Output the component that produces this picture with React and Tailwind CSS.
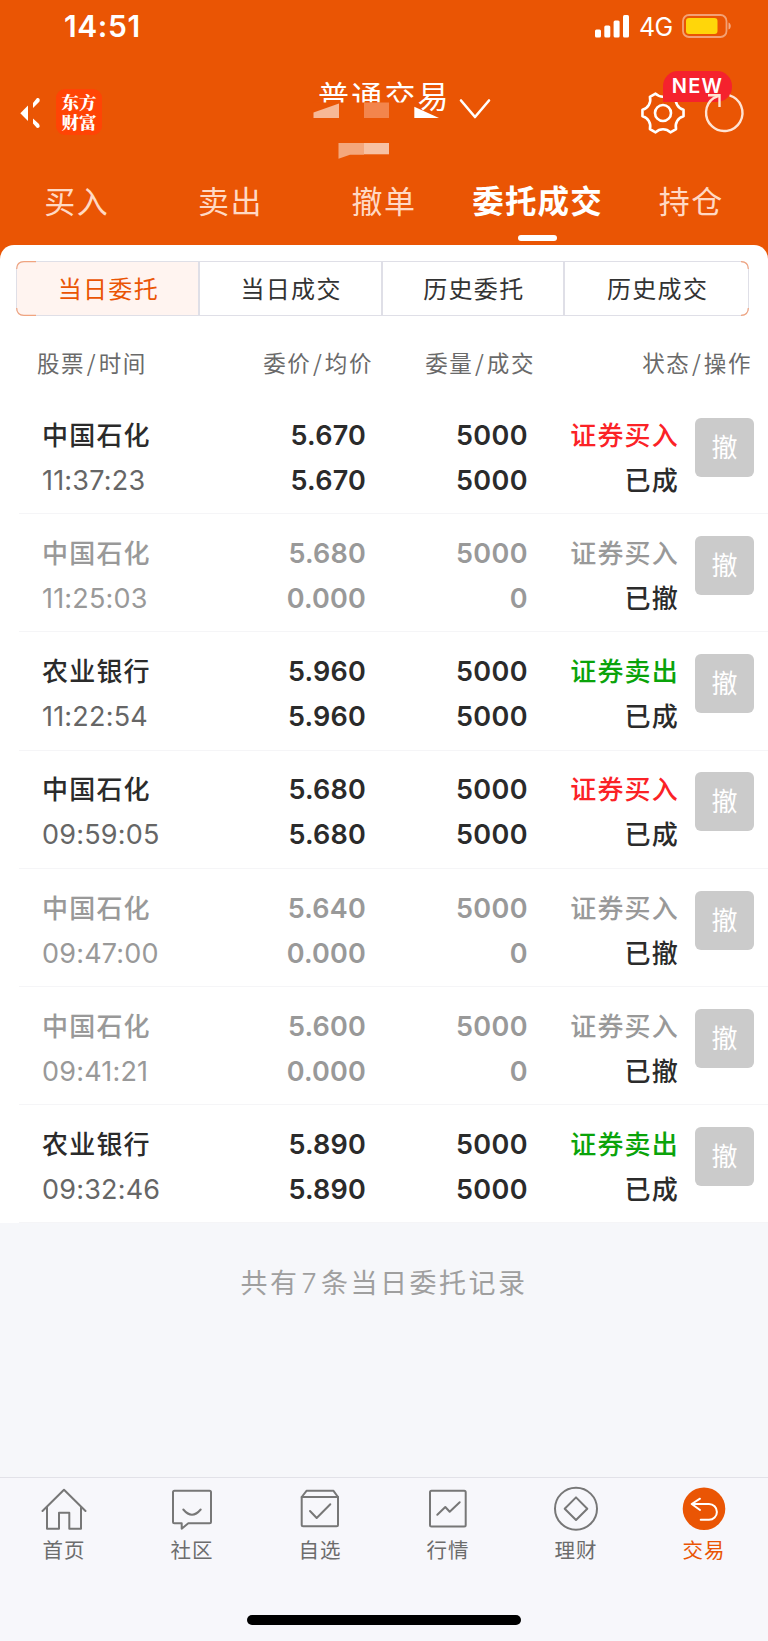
const TABS = ["买入", "卖出", "撤单", "委托成交", "持仓"];
const SEGMENTS = ["当日委托", "当日成交", "历史委托", "历史成交"];

const ORDERS = [
  { name:"中国石化", time:"11:37:23", price:"5.670", avg:"5.670", qty:"5000", filled:"5000", side:"buy",  done:true },
  { name:"中国石化", time:"11:25:03", price:"5.680", avg:"0.000", qty:"5000", filled:"0",    side:"buy",  done:false },
  { name:"农业银行", time:"11:22:54", price:"5.960", avg:"5.960", qty:"5000", filled:"5000", side:"sell", done:true },
  { name:"中国石化", time:"09:59:05", price:"5.680", avg:"5.680", qty:"5000", filled:"5000", side:"buy",  done:true },
  { name:"中国石化", time:"09:47:00", price:"5.640", avg:"0.000", qty:"5000", filled:"0",    side:"buy",  done:false },
  { name:"中国石化", time:"09:41:21", price:"5.600", avg:"0.000", qty:"5000", filled:"0",    side:"buy",  done:false },
  { name:"农业银行", time:"09:32:46", price:"5.890", avg:"5.890", qty:"5000", filled:"5000", side:"sell", done:true },
];

const SIDE = {
  buy:  { label:"证券买入", color:"text-[#fb2226]" },
  sell: { label:"证券卖出", color:"text-[#0aa30a]" },
};

// six flat teeth with a hollow between each pair
const gearPath = (() => {
  const pt = (deg, r) => {
    const a = deg * Math.PI / 180;
    return `${(r * Math.cos(a)).toFixed(2)} ${(r * Math.sin(a)).toFixed(2)}`;
  };
  let d = `M${pt(-9, 20.8)}`;
  for (let k = 0; k < 6; k++) {
    const b = k * 60;
    d += `L${pt(b + 9, 20.8)}C${pt(b + 18, 15.6)} ${pt(b + 42, 15.6)} ${pt(b + 51, 20.8)}`;
  }
  return d + "Z";
})();

const StatusBar = () => (
  <div className="flex h-[52px] items-center justify-between pl-[64px] pr-[36px]">
    <span className="text-[30px] font-semibold leading-[52px] tracking-[0.6px]">14:51</span>
    <div className="flex items-center">
      <svg width="34" height="23" viewBox="0 0 34 23" fill="#fff">
        <rect x="0" y="14.5" width="6" height="8" rx="1.5" />
        <rect x="9.3" y="10.5" width="6" height="12" rx="1.5" />
        <rect x="18.6" y="5.5" width="6" height="17" rx="1.5" />
        <rect x="28" y="0" width="6" height="22.5" rx="1.5" />
      </svg>
      <span className="ml-[10px] w-[43px] pt-[2px] text-[25px] leading-[50px] tracking-[-0.6px]">4G</span>
      <svg width="50" height="24" viewBox="0 0 50 24">
        <rect x="1" y="1" width="43.5" height="22" rx="6" fill="none" stroke="#fff" strokeOpacity=".45" strokeWidth="1.8" />
        <rect x="4" y="4" width="31.5" height="16" rx="3" fill="#ffd60a" />
        <path d="M46.5 8.5c3 1 3 6 0 7z" fill="#fff" fillOpacity=".5" />
      </svg>
    </div>
  </div>
);

const TitleBar = () => (
  <div className="flex h-[120px] items-start pl-[18px] pr-[21px]">
    <div className="flex pt-[37px]">
      <svg className="mt-[6px]" width="24" height="38" viewBox="0 0 24 38" fill="#fff">
        <path d="M2.3 18.3L10 10.5v15.5z" />
        <path d="M15 8v5l6.5-6.5q1-4-2.500-3.500zM15 23.500v5l4 4.500q4 0 2-4z" />
      </svg>
      <div className="ml-[14px] flex size-[46px] flex-col items-center justify-center rounded-[9px] bg-[#ff4405] font-['Noto_Serif_CJK_SC','Noto_Sans_CJK_SC',serif] text-[17.5px] font-black leading-[20px]">
        <span>东方</span>
        <span>财富</span>
      </div>
    </div>
    <div className="relative ml-[216px] flex pt-[23px]">
      <span className="text-[31px] leading-[44px] tracking-[2.2px]">普通交易</span>
      <svg className="ml-[7px] mt-[22px]" width="34" height="24" viewBox="0 0 34 24" fill="none" stroke="#fff" strokeWidth="2.6" strokeLinecap="round" strokeLinejoin="round">
        <path d="M3 3.500L17 20L31 3.500" />
      </svg>
      {/* masked account number */}
      <svg className="absolute -left-[5px] top-[50px]" width="130" height="60" viewBox="313 102 130 60">
        <path d="M313 102.5H414.3V120H313z" fill="#ea5504" />
        <path d="M313.5 112.5L339 103.5V118H313.5z" fill="#f7b896" />
        <path d="M364 102.5H389V118H364z" fill="#f3854c" />
        <path d="M414.3 106.7L439 118H414.3z" fill="#fff" />
        <path d="M338.5 143H364V154.7H350L338.5 158.7z" fill="#f4a77c" />
        <path d="M364 143H389V154.3H364z" fill="#f7c1a3" />
      </svg>
    </div>
    <div className="relative ml-auto flex gap-[15px] pt-[38px]">
      <svg width="46" height="46" viewBox="-23 -23 46 46" fill="none" stroke="#fff" strokeWidth="2.6" strokeLinejoin="round">
        <path d={gearPath} />
        <circle r="8" />
      </svg>
      <span className="absolute left-[23px] top-[19px] h-[31px] w-[69px] rounded-[15px] rounded-bl-none bg-[#f5222d] text-center text-[20px] font-semibold leading-[31px] tracking-[1.2px]">NEW</span>
      <svg className="relative" width="46" height="46" viewBox="-23 -23 46 46" fill="none" stroke="#ffe3d3" strokeWidth="2.4">
        <path d="M5.5 -17.6A18.2 18.2 0 1 1 -10 -15.2L-5 -17.4" />
        <path d="M-16 -17.8H-4.5V-6" />
      </svg>
    </div>
  </div>
);

const Tabs = () => (
  <div className="grid grid-cols-5">
    {TABS.map((t, i) => (
      <div key={t} className="flex flex-col items-center whitespace-nowrap">
        {i === 3
          ? <span className="text-[31.5px] font-semibold leading-[60px] tracking-[1.2px]">{t}</span>
          : <span className="text-[31px] leading-[60px] tracking-[1.5px] text-[#ffd9c4]">{t}</span>}
        {i === 3 && <div className="mt-[3px] h-[6px] w-[39px] rounded-full bg-white" />}
      </div>
    ))}
  </div>
);

const Segments = () => (
  <div className="relative mx-[16px] w-[733px]">
    <div className="grid h-[55px] grid-cols-4 overflow-hidden rounded-[8px] border-[1.5px] border-[#dfdfe7]">
      {SEGMENTS.map((s, i) => (
        <div key={s} className={i === 0
          ? "border-r-2 border-[#dfdfe7] bg-[#fff4f0] pl-[2px] text-center text-[24px] leading-[55px] tracking-[1.3px] text-[#ea5504]"
          : "border-r-2 border-[#dfdfe7] pl-[2px] text-center text-[24px] leading-[55px] tracking-[1.3px] text-[#333] last:border-r-0"}>
          {s}
        </div>
      ))}
    </div>
    {/* orange corner ends */}
    <svg className="absolute left-0 top-0" width="733" height="55" viewBox="0 0 733 55" fill="none" stroke="#f0a480" strokeWidth="1.2">
      <path d="M20 .7H8Q.7 .7 .7 8M.7 47Q.7 54.3 8 54.3H20" />
      <path d="M725 .7Q732.3 .7 732.3 8M732.3 47Q732.3 54.3 725 54.3" />
    </svg>
  </div>
);

const Slash = () => <span className="px-[1.5px]">/</span>;

const Head = () => (
  <div className="flex h-[80px] items-center whitespace-nowrap pt-[14px] font-['Noto_Sans_CJK_SC',sans-serif] text-[22.5px] tracking-[1.6px] text-[#6a6a6a]">
    <span className="w-[224px] pl-[37px]">股票<Slash />时间</span>
    <span className="w-[149px] text-right">委价<Slash />均价</span>
    <span className="w-[162px] text-right">委量<Slash />成交</span>
    <span className="w-[217px] text-right">状态<Slash />操作</span>
  </div>
);

const Row = ({ o }) => {
  const main = o.done ? "text-[#2b2b2b]" : "text-[#999]";
  const sub = o.done ? "text-[#666]" : "text-[#999]";
  const side = SIDE[o.side];
  return (
    <div className="ml-[19px] flex h-[118.2px] items-start border-b-[1.5px] border-[#f5f5f7] pt-[16.8px] text-[27px] leading-[45px] whitespace-nowrap">
      <div className="w-[199px] pl-[23px]">
        <p className={`text-[26px] font-medium tracking-[1.2px] ${main}`}>{o.name}</p>
        <p className={`tracking-[0.2px] ${sub}`}>{o.time}</p>
      </div>
      <div className={`w-[148px] text-right font-semibold tracking-[0.2px] ${main}`}>
        <p>{o.price}</p>
        <p>{o.avg}</p>
      </div>
      <div className={`w-[162px] text-right font-semibold tracking-[0.4px] ${main}`}>
        <p>{o.qty}</p>
        <p>{o.filled}</p>
      </div>
      <div className="w-[151px] text-right text-[26px] font-medium tracking-[1.2px]">
        <p className={o.done ? side.color : "text-[#999]"}>{side.label}</p>
        <p className="text-[#2b2b2b]">{o.done ? "已成" : "已撤"}</p>
      </div>
      <button className="ml-[16px] mt-[5px] size-[59px] rounded-[6px] bg-[#cbcbcb] text-[26px] leading-[59px] text-white">撤</button>
    </div>
  );
};

const NAV = [
  { label:"首页", icon:<path d="M2.5 27L24 5.7L45.5 27M7 23V44.7H19V28.7H29.3V44.7H41V23" /> },
  { label:"社区", icon:<>
    <path d="M6.5 6.7H41.5Q43 6.7 43 8.2V37.8Q43 39.3 41.5 39.3H20.3L13.7 44.7V39.3H6.5Q5 39.3 5 37.8V8.2Q5 6.7 6.5 6.7Z" />
    <path d="M15.3 25.5Q24 35.8 32.7 25.5" />
  </> },
  { label:"自选", icon:<>
    <path d="M5.7 13L10.7 6.7H37.3L42 13V40.8Q42 42.3 40.5 42.3H7.2Q5.7 42.3 5.7 40.8Z" />
    <path d="M5.7 13H42M14 27L20.7 34L34.3 20.3" />
  </> },
  { label:"行情", icon:<>
    <rect x="6" y="6.7" width="35.7" height="35.7" rx="1.5" />
    <path d="M13.3 30.7L21.3 23L25.7 27.7L35.7 18.3" />
  </> },
  { label:"理财", icon:<>
    <circle cx="24" cy="24.7" r="21" />
    <path d="M24 13.4L35.3 24.7L24 36L12.7 24.7Z" />
  </> },
  { label:"交易", active:true, icon:<>
    <circle cx="24" cy="24.7" r="21.3" fill="#ea5504" stroke="none" />
    <path d="M20 14.7L11.7 20L20 26M11.7 20H29A7.9 7.9 0 0 1 29 35.8H20.7" stroke="#fff" />
  </> },
];

const BottomNav = () => (
  <div className="h-[164px] border-t-[1.5px] border-[#e2e2e8] bg-[#f7f7fb]">
    <div className="grid grid-cols-6 pt-[6px]">
      {NAV.map(n => (
        <div key={n.label} className="flex flex-col items-center">
          <svg width="48" height="48" viewBox="0 0 48 48" fill="none" stroke="#777" strokeWidth="2" strokeLinejoin="round" strokeLinecap="round">
            {n.icon}
          </svg>
          <span className={n.active
            ? "text-[20.5px] leading-[38px] tracking-[1px] text-[#ea5504]"
            : "text-[20.5px] leading-[38px] tracking-[1px] text-[#6c6c6c]"}>{n.label}</span>
        </div>
      ))}
    </div>
    <div className="mx-auto mt-[45px] h-[10px] w-[274px] rounded-full bg-black" />
  </div>
);

const App = () => (
  <div className="flex h-[1641px] w-[768px] flex-col overflow-hidden bg-[#f6f7fa] font-['Inter','Noto_Sans_CJK_SC',sans-serif]">
    <div className="bg-[#ea5504] text-white">
      <StatusBar />
      <TitleBar />
      <Tabs />
      <div className="mt-[4px] h-[16px] rounded-t-[14px] bg-white" />
    </div>

    <div className="bg-white">
      <Segments />
      <Head />
      {ORDERS.map(o => <Row key={o.time} o={o} />)}
    </div>

    <p className="flex-1 pt-[41px] text-center text-[27px] leading-[40px] tracking-[2.5px] text-[#9f9f9f]">
      共有<span className="px-[2px] font-light">7</span>条当日委托记录
    </p>

    <BottomNav />
  </div>
);

export default App;
